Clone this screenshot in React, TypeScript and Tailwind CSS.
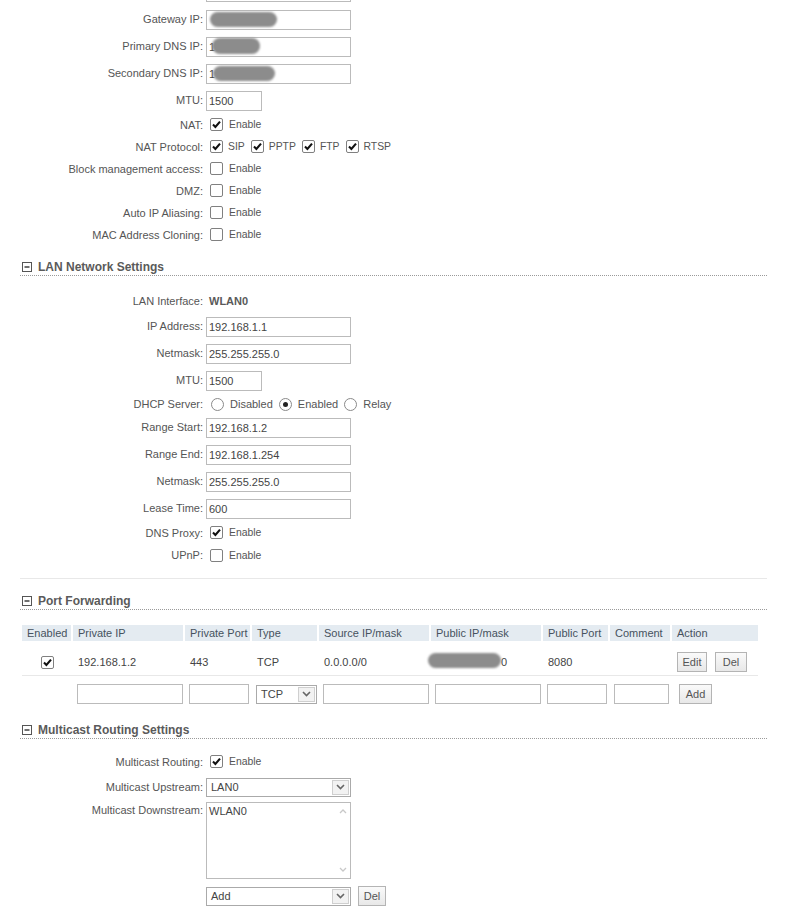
import React from "react"

const Check = ({ on }: { on?: boolean }) => (
    <span className="inline-flex w-[13px] h-[13px] shrink-0 items-center justify-center border border-[#808080] bg-white rounded-[2px]">
        {on && (
            <svg width="11" height="11" viewBox="0 0 11 11">
                <path d="M2 5.6 L4.4 8 L9 2.6" stroke="#111" strokeWidth="2.1" fill="none" />
            </svg>
        )}
    </span>
)

const Radio = ({ on }: { on?: boolean }) => (
    <span className="inline-flex w-[13px] h-[13px] shrink-0 items-center justify-center border border-[#8a8a8a] bg-white rounded-full">
        {on && <span className="w-[5px] h-[5px] rounded-full bg-[#222]" />}
    </span>
)

const Chevron = () => (
    <svg width="9" height="6" viewBox="0 0 9 6">
        <path d="M1 1 L4.5 4.5 L8 1" stroke="#666" strokeWidth="1.6" fill="none" />
    </svg>
)

const Select = ({ value, w }: { value: string; w: string }) => (
    <div className={`${w} h-[19px] flex items-stretch border border-[#aaa] bg-white`}>
        <span className="flex-1 pl-[4px] leading-[17px] text-[#444]">{value}</span>
        <span className="w-[17px] m-[1px] flex items-center justify-center border border-[#cfcfcf] bg-[#f2f2f2]">
            <Chevron />
        </span>
    </div>
)

const Btn = ({ children, w }: { children: React.ReactNode; w: string }) => (
    <button className={`${w} h-[20px] border border-[#b4b4b4] bg-gradient-to-b from-[#fafafa] to-[#e8e8e8] text-[11px] text-[#555] leading-[18px]`}>
        {children}
    </button>
)

const TextIn = ({ value, w = "w-[145px]" }: { value?: string; w?: string }) => (
    <input
        readOnly
        value={value ?? ""}
        className={`${w} h-[20px] border border-[#bbb] px-[2px] text-[11px] text-[#444] outline-none bg-white`}
    />
)

const Row = ({ label, h, children }: { label: string; h: string; children?: React.ReactNode }) => (
    <div className={`flex items-center ${h}`}>
        <div className="w-[203px] text-right text-[#555]">{label}</div>
        <div className="ml-[3px] flex items-center">{children}</div>
    </div>
)

const Enable = ({ on }: { on?: boolean }) => (
    <span className="flex items-center ml-[4px] gap-[6px] text-[10.4px] text-[#555]">
        <Check on={on} />
        Enable
    </span>
)

const Blob = ({ cls }: { cls: string }) => (
    <span className={`absolute rounded-full bg-[#8c8c8c] blur-[1.2px] ${cls}`} />
)

const SectionHead = ({ title, cls }: { title: string; cls: string }) => (
    <div className={`mx-[20px] h-[18px] flex items-center gap-[6px] pl-[2px] border-b border-dotted border-[#9a9a9a] ${cls}`}>
        <svg width="10" height="10" viewBox="0 0 10 10">
            <rect x="0.5" y="0.5" width="9" height="9" fill="white" stroke="#555" />
            <path d="M2.5 5 H7.5" stroke="#333" strokeWidth="1.4" />
        </svg>
        <span className="font-bold text-[12px] text-[#5a5a5a]">{title}</span>
    </div>
)

const cols = "grid grid-cols-[49px_110px_65px_65px_110px_110px_65px_60px_86px] gap-x-[2px]"

export default function App() {
    const heads = ["Enabled", "Private IP", "Private Port", "Type", "Source IP/mask", "Public IP/mask", "Public Port", "Comment", "Action"]

    return (
        <div className="w-[787px] min-h-[909px] bg-white text-[11px] font-['Liberation_Sans',Arial,sans-serif] overflow-hidden">
            {/* tail of the previous input */}
            <div className="ml-[206px] w-[145px] h-[2px] border-x border-b border-[#bbb]" />

            <div className="mt-[4px]">
                <Row label="Gateway IP:" h="h-[27px]">
                    <span className="relative flex">
                        <TextIn />
                        <Blob cls="left-[4px] top-[2px] w-[67px] h-[15px]" />
                    </span>
                </Row>
                <Row label="Primary DNS IP:" h="h-[27px]">
                    <span className="relative flex">
                        <TextIn value="1" />
                        <Blob cls="left-[6px] top-[1px] w-[48px] h-[16px]" />
                    </span>
                </Row>
                <Row label="Secondary DNS IP:" h="h-[27px]">
                    <span className="relative flex">
                        <TextIn value="1" />
                        <Blob cls="left-[7px] top-[2px] w-[62px] h-[15px]" />
                    </span>
                </Row>
                <Row label="MTU:" h="h-[27px]">
                    <TextIn value="1500" w="w-[56px]" />
                </Row>
                <Row label="NAT:" h="h-[22px]">
                    <Enable on />
                </Row>
                <Row label="NAT Protocol:" h="h-[22px]">
                    <span className="flex items-center ml-[4px] gap-[5px] text-[10.4px] text-[#555]">
                        <Check on /><span className="mr-[1px]">SIP</span>
                        <Check on /><span className="mr-[1px]">PPTP</span>
                        <Check on /><span className="mr-[1px]">FTP</span>
                        <Check on /><span>RTSP</span>
                    </span>
                </Row>
                <Row label="Block management access:" h="h-[22px]">
                    <Enable />
                </Row>
                <Row label="DMZ:" h="h-[22px]">
                    <Enable />
                </Row>
                <Row label="Auto IP Aliasing:" h="h-[22px]">
                    <Enable />
                </Row>
                <Row label="MAC Address Cloning:" h="h-[22px]">
                    <Enable />
                </Row>
            </div>

            <SectionHead title="LAN Network Settings" cls="mt-[12px]" />

            <div className="mt-[13px]">
                <Row label="LAN Interface:" h="h-[24px]">
                    <span className="ml-[3px] font-bold text-[#5a5a5a]">WLAN0</span>
                </Row>
                <Row label="IP Address:" h="h-[27px]">
                    <TextIn value="192.168.1.1" />
                </Row>
                <Row label="Netmask:" h="h-[27px]">
                    <TextIn value="255.255.255.0" />
                </Row>
                <Row label="MTU:" h="h-[27px]">
                    <TextIn value="1500" w="w-[56px]" />
                </Row>
                <Row label="DHCP Server:" h="h-[20px]">
                    <span className="flex items-center ml-[5px] gap-[6px] text-[#555]">
                        <Radio />Disabled
                        <Radio on />Enabled
                        <Radio />Relay
                    </span>
                </Row>
                <Row label="Range Start:" h="h-[27px]">
                    <TextIn value="192.168.1.2" />
                </Row>
                <Row label="Range End:" h="h-[27px]">
                    <TextIn value="192.168.1.254" />
                </Row>
                <Row label="Netmask:" h="h-[27px]">
                    <TextIn value="255.255.255.0" />
                </Row>
                <Row label="Lease Time:" h="h-[27px]">
                    <TextIn value="600" />
                </Row>
                <Row label="DNS Proxy:" h="h-[22px]">
                    <Enable on />
                </Row>
                <Row label="UPnP:" h="h-[23px]">
                    <Enable />
                </Row>
            </div>

            <div className="mx-[20px] mt-[11px] border-t border-[#e8e8e8]" />

            <SectionHead title="Port Forwarding" cls="mt-[13px]" />

            <div className="ml-[22px] w-[736px] mt-[15px]">
                <div className={`${cols} h-[16px]`}>
                    {heads.map(h => (
                        <div key={h} className="bg-[#e4ebf1] px-[5px] leading-[16px] text-[#46525e] whitespace-nowrap">{h}</div>
                    ))}
                </div>
                <div className={`${cols} mt-[2px] h-[33px] pt-[6px] items-center border-b border-[#e8e8e8] text-[#444]`}>
                    <div className="flex justify-center pl-[1px]"><Check on /></div>
                    <div className="px-[5px]">192.168.1.2</div>
                    <div className="px-[5px]">443</div>
                    <div className="px-[5px]">TCP</div>
                    <div className="px-[5px]">0.0.0.0/0</div>
                    <div className="relative px-[5px]">
                        <Blob cls="left-[-3px] top-[-1px] w-[73px] h-[15px]" />
                        <span className="ml-[65px]">0</span>
                    </div>
                    <div className="px-[5px]">8080</div>
                    <div />
                    <div className="flex gap-[8px] pl-[5px]">
                        <Btn w="w-[30px]">Edit</Btn>
                        <Btn w="w-[32px]">Del</Btn>
                    </div>
                </div>
                <div className={`${cols} h-[36px] items-center`}>
                    <div />
                    <div className="pl-[4px]"><TextIn w="w-[106px]" /></div>
                    <div className="pl-[4px]"><TextIn w="w-[60px]" /></div>
                    <div className="pl-[4px]"><Select value="TCP" w="w-[61px]" /></div>
                    <div className="pl-[4px]"><TextIn w="w-[106px]" /></div>
                    <div className="pl-[4px]"><TextIn w="w-[106px]" /></div>
                    <div className="pl-[4px]"><TextIn w="w-[60px]" /></div>
                    <div className="pl-[4px]"><TextIn w="w-[55px]" /></div>
                    <div className="pl-[7px]"><Btn w="w-[33px]">Add</Btn></div>
                </div>
            </div>

            <SectionHead title="Multicast Routing Settings" cls="mt-[9px]" />

            <div className="mt-[12px]">
                <Row label="Multicast Routing:" h="h-[22px]">
                    <Enable on />
                </Row>
                <div className="mt-[2px]">
                    <Row label="Multicast Upstream:" h="h-[24px]">
                        <Select value="LAN0" w="w-[145px]" />
                    </Row>
                </div>
                <div className="flex items-start mt-[3px]">
                    <div className="w-[203px] text-right text-[#555] pt-[1px] leading-[14px]">Multicast Downstream:</div>
                    <div className="ml-[3px] w-[145px] h-[77px] border border-[#bbb] bg-white flex">
                        <span className="flex-1 pl-[2px] pt-[1px] leading-[14px] text-[#444]">WLAN0</span>
                        <span className="w-[15px] flex flex-col items-center justify-between py-[6px]">
                            <svg width="8" height="5" viewBox="0 0 8 5">
                                <path d="M1 4 L4 1 L7 4" stroke="#c8c8c8" strokeWidth="1.3" fill="none" />
                            </svg>
                            <svg width="8" height="5" viewBox="0 0 8 5">
                                <path d="M1 1 L4 4 L7 1" stroke="#c8c8c8" strokeWidth="1.3" fill="none" />
                            </svg>
                        </span>
                    </div>
                </div>
                <div className="flex items-center mt-[7px] ml-[206px] gap-[7px]">
                    <Select value="Add" w="w-[145px]" />
                    <Btn w="w-[28px]">Del</Btn>
                </div>
            </div>
        </div>
    )
}
